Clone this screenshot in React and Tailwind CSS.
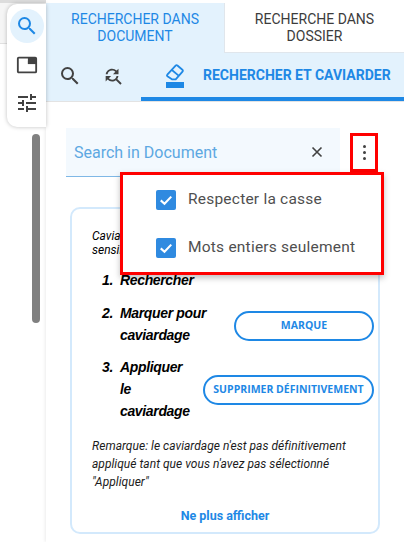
import React from "react";

const roboto = "font-['Roboto',sans-serif]";

function Search({ className = "" }) {
  return (
    <svg viewBox="0 0 24 24" className={className} fill="currentColor">
      <path d="M15.5 14h-.79l-.28-.27A6.471 6.471 0 0 0 16 9.5 6.5 6.5 0 1 0 9.5 16c1.61 0 3.09-.59 4.23-1.57l.27.28v.79l5 4.99L20.49 19l-4.99-5zm-6 0C7.01 14 5 11.99 5 9.5S7.01 5 9.5 5 14 7.01 14 9.5 11.99 14 9.5 14z" />
    </svg>
  );
}

function FindReplace({ className = "" }) {
  return (
    <svg viewBox="0 0 24 24" className={className} fill="currentColor">
      <path d="M11 6c1.38 0 2.63.56 3.54 1.46L12 10h6V4l-2.05 2.05A6.976 6.976 0 0 0 11 4c-3.53 0-6.43 2.61-6.92 6H6.1A5 5 0 0 1 11 6zm5.64 9.14A6.89 6.89 0 0 0 17.92 12H15.9a5 5 0 0 1-4.9 4c-1.38 0-2.63-.56-3.54-1.46L10 12H4v6l2.05-2.05A6.976 6.976 0 0 0 11 18c1.55 0 2.98-.51 4.14-1.36L20 21.49 21.49 20l-4.85-4.86z" />
    </svg>
  );
}

function Eraser({ className = "" }) {
  return (
    <svg viewBox="0 0 18 17" className={className} fill="none" stroke="currentColor" strokeWidth="1.8" strokeLinejoin="round">
      <path d="M1.3 10.6 9.6 1.6a1.3 1.3 0 0 1 1.8-.1l5 4.2a1.3 1.3 0 0 1 .1 1.9L9.7 15.4H6.3L1.4 12.2a1 1 0 0 1-.1-1.6z" />
      <path d="M5.6 5.8 12.6 11.6" />
    </svg>
  );
}

function Check({ label }) {
  return (
    <div className="flex items-center h-12">
      <span className="w-5 h-5 rounded-[2px] bg-[#2f8ae0] flex items-center justify-center">
        <svg viewBox="0 0 24 24" className="w-[18px] h-[18px]" fill="none" stroke="white" strokeWidth="2.8">
          <path d="M5 12.5 10 17 19 7.5" />
        </svg>
      </span>
      <span className="ml-3 text-[15.5px] text-[#4f4f4f] tracking-[0.22px]">{label}</span>
    </div>
  );
}

function Step({ n, className = "", children }) {
  return (
    <div className={`flex text-[14px] leading-[22px] italic font-bold text-black font-['Liberation_Sans',sans-serif] tracking-[-0.35px] ${className}`}>
      <span className="w-[18px] shrink-0">{n}.</span>
      <span>{children}</span>
    </div>
  );
}

function Pill({ className = "", children }) {
  return (
    <div className={`h-[30px] rounded-full border-2 border-[#1e88e5] flex items-center justify-center text-[#1e88e5] text-[10.5px] font-bold font-['Open_Sans',sans-serif] ${className}`}>
      {children}
    </div>
  );
}

export default function App() {
  return (
    <div className={`relative w-[404px] h-[542px] overflow-hidden bg-white ${roboto}`}>
      <div className="flex h-full">
        <div className="w-[46px] shrink-0 relative">
          <div className="h-[44px] bg-[#f5f5f5] border-b border-[#e0e0e0] border-t-[3px] border-t-[#dcdcdc]" />
          <div className="absolute left-[7px] top-[4px] w-[39px] h-[123px] bg-white rounded-l-[10px] shadow-[0_0_4px_rgba(0,0,0,0.25)] flex flex-col items-center">
            <div className="mt-[5px] ml-[1px] w-[34px] h-[34px] rounded-full bg-[#e3f2fd] flex items-center justify-center text-[#1e88e5]">
              <Search className="w-[24px] h-[24px]" />
            </div>
            <svg viewBox="0 0 24 24" className="w-[22px] h-[22px] mt-[11px] text-[#424242]" fill="currentColor">
              <path d="M19 7h-6v4h6V7zm2-4H3a2 2 0 0 0-2 2v14c0 1.1.9 2 2 2h18a2 2 0 0 0 2-2V5a2 2 0 0 0-2-2zm0 16H3V5h18v14z" />
              <path d="M13 4h9v7h-9z" />
            </svg>
            <svg viewBox="0 0 24 24" className="w-[24px] h-[24px] mt-[15px] text-[#424242]" fill="currentColor">
              <path d="M3 17v2h6v-2H3zM3 5v2h10V5H3zm10 16v-2h8v-2h-8v-2h-2v6h2zM7 9v2H3v2h4v2h2V9H7zm14 4v-2H11v2h10zm-6-4h2V7h4V5h-4V3h-2v6z" />
            </svg>
          </div>
          <div className="absolute left-[32px] top-[134px] w-2 h-[189px] rounded-full bg-[#808080]" />
        </div>

        <div className="flex-1 min-w-0 flex flex-col pt-[3px] shadow-[-1px_0_3px_rgba(0,0,0,0.08)]">
          <div className="flex h-[50px] text-[14px] leading-[17px] text-center">
            <div className="w-[178px] bg-[#e3f2fd] text-[#1e88e5] flex items-center justify-center px-4">
              RECHERCHER DANS DOCUMENT
            </div>
            <div className="flex-1 text-[#3c3c3c] border-l border-b border-[#e0e6ec] flex items-center justify-center px-6">
              RECHERCHE DANS DOSSIER
            </div>
          </div>
          <div className="h-[49px] bg-[#e3f2fd] flex border-b border-[#e3e3e3]">
            <div className="w-[95px] flex items-center text-[#424242] pb-[2px]">
              <Search className="w-[24px] h-[24px] ml-[12px]" />
              <FindReplace className="w-[22px] h-[22px] ml-[20px]" />
            </div>
            <div className="flex-1 border-b-[4px] border-[#1e88e5] flex items-center text-[#1e88e5]">
              <div className="ml-[25px] w-[18px] flex flex-col items-center mt-[2px]">
                <Eraser className="w-[18px] h-[17px]" />
                <div className="w-[18px] h-[6px] bg-[#1e88e5] mt-[1px]" />
              </div>
              <span className="ml-[19px] text-[14px] font-bold">RECHERCHER ET CAVIARDER</span>
            </div>
          </div>

          <div className="flex items-center ml-[20px] mt-[26px]">
            <div className="w-[274px] h-[49px] bg-[#f3f9fe] border-b border-[#7fb8e6] flex items-center justify-between pl-2 pr-[14px]">
              <span className="text-[16px] text-[#5da8e2] mt-[1px]">Search in Document</span>
              <svg viewBox="0 0 24 24" className="w-[18px] h-[18px] text-[#424242]" fill="none" stroke="currentColor" strokeWidth="2.2">
                <path d="M6 6 18 18M18 6 6 18" />
              </svg>
            </div>
            <div className="ml-[10px] w-[28px] h-[39px] border-[3px] border-[#ff0000] flex flex-col items-center justify-center gap-[3px]">
              <i className="w-[3px] h-[3px] rounded-full bg-[#424242]" />
              <i className="w-[3px] h-[3px] rounded-full bg-[#424242]" />
              <i className="w-[3px] h-[3px] rounded-full bg-[#424242]" />
            </div>
          </div>

          <div className="ml-[24px] mt-[30px] w-[310px] h-[327px] border-2 border-[#d3e9fc] rounded-[10px] pl-[20px] pr-[4px] flex flex-col">
            <p className="mt-[20px] text-[12px] leading-[14px] italic text-black h-[28px]">
              Caviardage
              <br />
              sensible
            </p>
            <div className="ml-[10px] mt-[12px] flex flex-col">
              <Step n="1" className="h-[22px]">Rechercher</Step>
              <div className="flex items-center justify-between mt-[11px]">
                <Step n="2" className="w-[125px]">Marquer pour caviardage</Step>
                <Pill className="w-[140px] mt-[4px]">MARQUE</Pill>
              </div>
              <div className="flex items-center justify-between mt-[10px]">
                <Step n="3" className="w-[80px]">Appliquer le caviardage</Step>
                <Pill className="w-[171px] mt-[2px]">SUPPRIMER DÉFINITIVEMENT</Pill>
              </div>
            </div>
            <p className="mt-[15px] text-[12px] leading-[18px] italic text-[#1c1c1c] tracking-[0.03px]">
              Remarque: le caviardage n'est pas définitivement appliqué tant que vous n'avez pas sélectionné "Appliquer"
            </p>
            <div className="mt-[16px] -ml-[20px] -mr-[4px] text-center text-[12.5px] font-bold text-[#1e88e5]">
              Ne plus afficher
            </div>
          </div>
        </div>
      </div>

      <div className="absolute left-[120px] top-[172px] w-[264px] h-[103px] bg-white border-[3px] border-[#ff0000] shadow-[0_3px_6px_rgba(0,0,0,0.25)] pl-[33px] flex flex-col justify-center">
        <Check label="Respecter la casse" />
        <Check label="Mots entiers seulement" />
      </div>
    </div>
  );
}
